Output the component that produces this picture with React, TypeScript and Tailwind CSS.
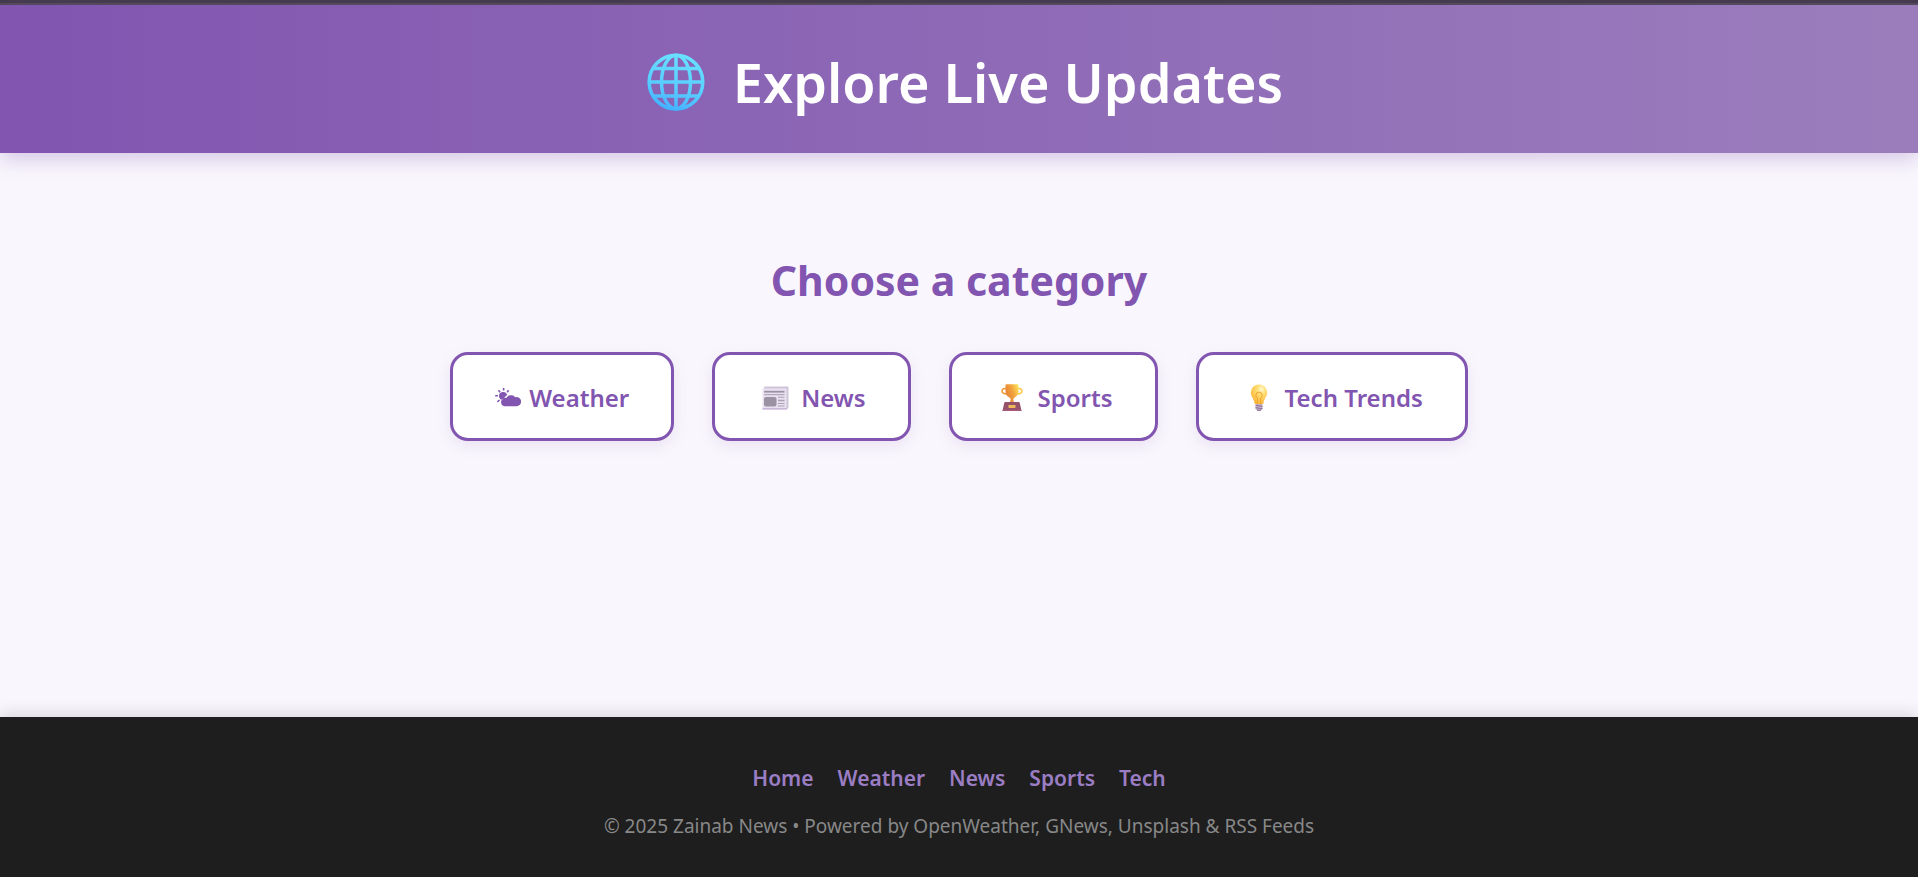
import type { ReactNode } from "react";

function GlobeIcon() {
  return (
    <svg viewBox="0 0 58 58" className="size-[58px]" fill="none" aria-hidden="true">
      <defs>
        <linearGradient id="globe" gradientUnits="userSpaceOnUse" x1="36" y1="2" x2="22" y2="56">
          <stop offset="0" stopColor="#6ae0ff" />
          <stop offset="0.6" stopColor="#58ceff" />
          <stop offset="1" stopColor="#46b2ff" />
        </linearGradient>
      </defs>
      <circle cx="28.6" cy="29.6" r="26.8" stroke="#3f9df0" strokeWidth="2.6" />
      <g stroke="url(#globe)" strokeWidth="3.5">
        <circle cx="29" cy="29" r="26.8" />
        <ellipse cx="29" cy="29" rx="14.5" ry="26.8" />
        <path d="M29 2V56M2 29H56M6.5 15.5H51.5M6.500 43H51.500" />
      </g>
    </svg>
  );
}

function WeatherIcon() {
  return (
    <svg viewBox="0 0 26 20" className="h-5 w-[26px]" fill="none" aria-hidden="true">
      <path
        d="M8.6 0V2.6M3.5 2.200L5.1 4.300M13.6 2.200L12.2 4.200M0.2 7.8H2.9M2.4 13.800L4.6 12"
        stroke="#8155b0"
        strokeWidth="1.6"
      />
      <path d="M4 8.200a4.2 4.2 0 0 1 8.2-1.3A7 7 0 0 0 9 10.400L6 11.800A4.2 4.2 0 0 1 4 8.200z" fill="#8155b0" />
      <path
        d="M9 18.200a4 4 0 0 1-.5-7.6 2.5 2.5 0 0 1 2.8-.5 5.3 5.3 0 0 1 8.9-.9 4.6 4.6 0 1 1 1 9z"
        fill="#8155b0"
      />
    </svg>
  );
}

function NewsIcon() {
  return (
    <svg viewBox="0 0 27 24" className="h-6 w-[27px]" aria-hidden="true">
      <path d="M2 1.5Q2 .5 3 .5H26Q26.500 .5 26.500 1.500V21Q26.500 23 24.500 23H2z" fill="#cfc5d9" />
      <path d="M.5 2.500H24.500V22Q24.500 23.200 23.200 23.200H.5z" fill="#e9e1f1" />
      <path d="M.5 22.300H25V23.500H.5z" fill="#bda6cf" />
      <path d="M2.200 4.800H22.500V6.600H2.200z" fill="#9a92a3" />
      <path d="M2.200 8.100H22.500V9.200H2.200z" fill="#aaa2b2" />
      <rect x="2" y="11" width="12.500" height="9.500" rx="2" fill="#9b93a4" />
      <path d="M16 10.800h6.500v1H16zM16 13.800h6.500v1.500H16zM16 17h6.500v1H16zM16 19.600h6.500v1H16z" fill="#aca4b5" />
    </svg>
  );
}

function TrophyIcon() {
  return (
    <svg viewBox="0 0 22 28" className="h-7 w-[22px]" fill="none" aria-hidden="true">
      <defs>
        <linearGradient id="cup" x1="0" y1="0.5" x2="1" y2="0">
          <stop offset="0" stopColor="#e58236" />
          <stop offset="0.5" stopColor="#f2a43c" />
          <stop offset="1" stopColor="#ffec61" />
        </linearGradient>
      </defs>
      <path d="M5.500 4.500H3.800A3 3 0 0 0 1 7.400Q1.200 9.700 5.800 10.100" stroke="#f09b38" strokeWidth="1.500" />
      <path d="M16.500 4.500h1.700A3 3 0 0 1 21 7.400q-.2 2.300-4.800 2.700" stroke="#fbc944" strokeWidth="1.500" />
      <path d="M4.500 1.200Q4.500 .2 5.500 .2h11q1 0 1 1v6q0 4.500-4 6.300-1.200.7-1.200 2.200 0 2 1.600 3H8.100q1.600-1 1.600-3 0-1.500-1.200-2.200-4-1.800-4-6.300z" fill="url(#cup)" />
      <path d="M3.200 19Q3.400 18 4.400 18H17.600Q18.600 18 18.800 19L20.500 27H1.500z" fill="#955268" />
      <path d="M1.700 25.800H20.300L20.500 27H1.500z" fill="#a85a7c" />
      <rect x="7.500" y="21" width="7" height="3" rx=".4" fill="#efb95a" />
    </svg>
  );
}

function BulbIcon() {
  return (
    <svg viewBox="0 0 18 28" className="h-7 w-[18px]" fill="none" aria-hidden="true">
      <defs>
        <radialGradient id="bulb" cx="0.65" cy="0.25" r="0.75">
          <stop offset="0" stopColor="#fff7cf" />
          <stop offset="0.35" stopColor="#ffdf75" />
          <stop offset="1" stopColor="#fbb638" />
        </radialGradient>
      </defs>
      <path d="M9 .4a8.200 8.200 0 0 1 8.200 8.200c0 4.200-3 5.800-3.700 10.300q-.2 1.200-1.300 1.200H5.800q-1.100 0-1.300-1.200C3.800 14.400 .8 12.800.8 8.600A8.200 8.200 0 0 1 9 .4z" fill="url(#bulb)" />
      <path d="M7.500 20V14.400Q5.800 13.400 5.900 11.200A3.100 3.100 0 0 1 12.100 11.200Q12.200 13.400 10.500 14.400V20" stroke="#f0a32f" strokeWidth="1" />
      <path d="M5.500 20H12.500V24.900L10.500 26.900H7.500L5.500 24.900z" fill="#c7b5cd" />
      <path d="M5.500 21.200L12.500 22.400M5.500 23.600L12.500 24.700M7 26L11 26.400" stroke="#8f7397" strokeWidth="1.100" />
    </svg>
  );
}

const categories: { label: string; icon: ReactNode; box: string }[] = [
  { label: "Weather", icon: <WeatherIcon />, box: "w-[26px]" },
  { label: "News", icon: <NewsIcon />, box: "w-9" },
  { label: "Sports", icon: <TrophyIcon />, box: "w-9" },
  { label: "Tech Trends", icon: <BulbIcon />, box: "w-9" },
];

const links = ["Home", "Weather", "News", "Sports", "Tech"];

export default function App() {
  return (
    <div className="flex min-h-screen flex-col bg-[#f9f7fd] font-['Noto_Sans','Open_Sans',sans-serif]">
      <div className="h-[5px] border-b-2 border-[#524957] bg-[#433a4b]" />
      <header className="flex items-center justify-center gap-7 bg-linear-to-r from-[#8155b0] to-[#9b7dbc] px-8 pt-[39px] pb-[33px] shadow-[0_6px_20px_rgba(129,85,176,0.3)]">
        <span className="flex w-[70px] justify-end">
          <GlobeIcon />
        </span>
        <h1 className="text-[54px] leading-[76px] font-semibold text-white">Explore Live Updates</h1>
      </header>
      <main className="flex grow flex-col items-center px-8 pt-[97px] pb-20">
        <h2 className="text-[41px] leading-[60px] font-bold text-[#8155b0]">Choose a category</h2>
        <div className="mt-[42px] flex flex-wrap justify-center gap-[38px]">
          {categories.map(({ label, icon, box }) => (
            <button
              key={label}
              type="button"
              className="flex items-center gap-2 rounded-[18px] border-3 border-[#8155b0] bg-white px-[42px] pt-[25px] pb-[23px] text-[24px] leading-[35px] font-semibold text-[#8155b0] shadow-[0_5px_15px_rgba(129,85,176,0.12)]"
            >
              <span className={`flex justify-center ${box}`}>{icon}</span>
              {label}
            </button>
          ))}
        </div>
      </main>
      <footer className="flex flex-col items-center bg-[#1e1e1e] px-8 pt-[45px] pb-9 shadow-[0_-4px_15px_rgba(0,0,0,0.12)]">
        <nav className="flex flex-wrap justify-center gap-6 text-[21px] leading-8 font-semibold text-[#9b7dc4]">
          {links.map((link) => (
            <a key={link} href={`#${link.toLowerCase()}`}>
              {link}
            </a>
          ))}
        </nav>
        <p className="mt-[17px] text-center text-[19px] leading-[30px] text-[#888888]">
          © 2025 Zainab News • Powered by OpenWeather, GNews, Unsplash &amp; RSS Feeds
        </p>
      </footer>
    </div>
  );
}
